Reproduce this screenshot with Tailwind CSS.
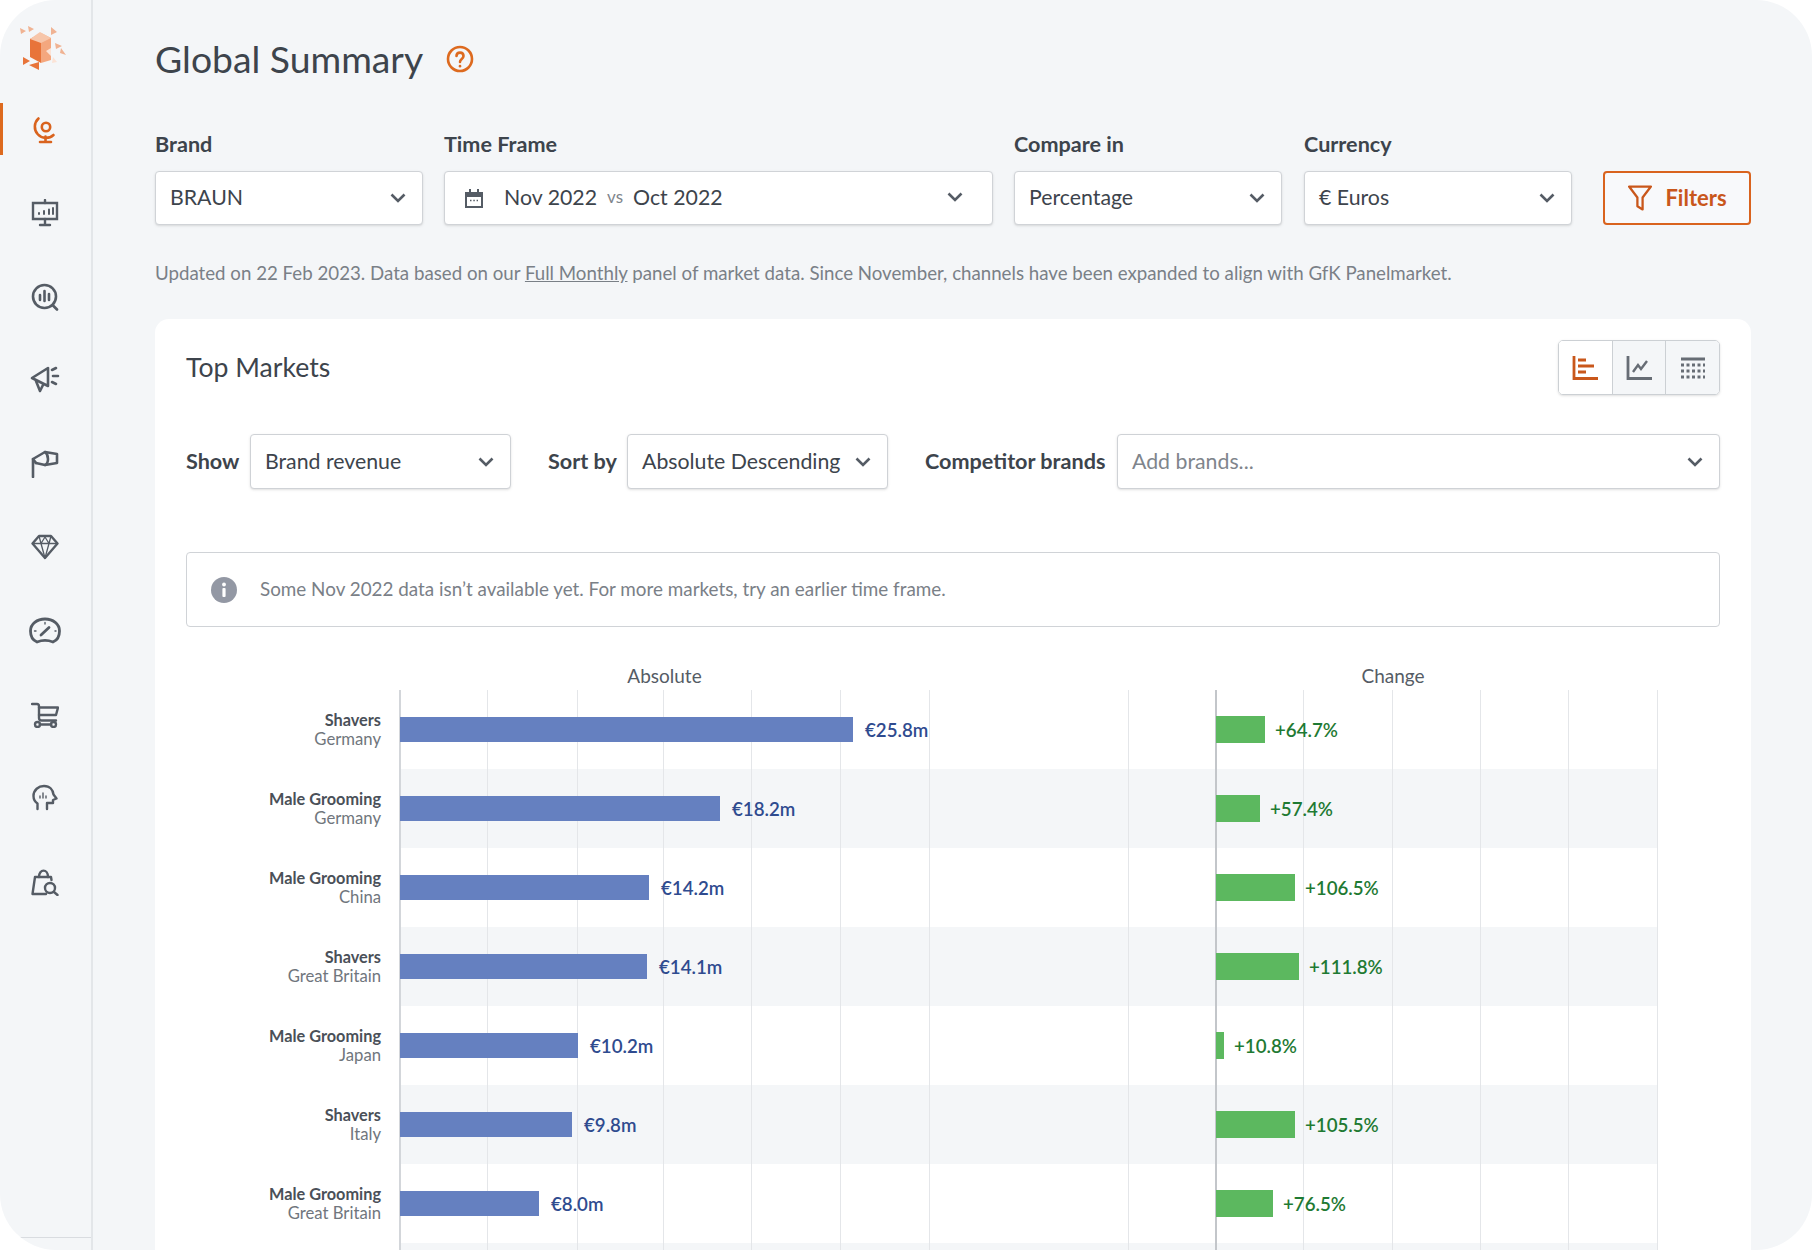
<!DOCTYPE html>
<html lang="en">
<head>
    <meta charset="UTF-8" />
    <meta name="viewport" content="width=device-width, initial-scale=1" />
    <title>Global Summary</title>
    <script src="https://cdn.jsdelivr.net/npm/@tailwindcss/browser@4"></script>
</head>
<body class="bg-white font-['Lato',sans-serif] text-[#3d444c]">
    <div class="flex w-[1812px] h-[1250px] overflow-hidden rounded-[56px] bg-[#f4f6f8]">
        <!-- Sidebar -->
        <aside class="relative w-[93px] shrink-0 h-full border-r-2 border-[#e3e6e9]">
            <div class="h-[103px] flex items-start justify-center pt-[24px] pr-[2px]">
                <svg width="52" height="52" viewBox="0 0 52 52">
                    <path d="M11 15 L22 9 L22 39 L11 33Z" fill="#e8743a"/>
                    <path d="M22 9 L32 14 L32 36 L22 39Z" fill="#f4a77e"/>
                    <path d="M11 15 L21 8 L32 14 L22 19Z" fill="#f7c6aa"/>
                    <path d="M1 4 L7 7 L2 10Z M9 2 L15 5 L10 8Z M32 3 L38 8 L32 11Z M36 19 L43 22 L37 25Z M42 24 L47 31 L41 29Z" fill="#f0b393"/>
                    <path d="M4 33 L11 37 L4 41Z M10 41 L20 38 L20 46Z" fill="#e8743a"/>
                    <path d="M27 27 L32 24 L32 32Z M34 33 L38 38 L33 39Z" fill="#fbe3d6"/>
                </svg>
            </div>
            <div class="flex flex-col pr-[2px]">
                <div class="relative h-[52px] flex items-center justify-center">
                    <span class="absolute left-0 top-0 w-[3px] h-[52px] bg-[#dd6a1f]"></span>
                    <svg class="mt-[2px]" width="24" height="28" viewBox="0 0 24 28" fill="none" stroke="#d9631e" stroke-width="2.6" stroke-linecap="round">
                        <circle cx="13" cy="11" r="4.2"/>
                        <path d="M5.5 2.5 A11 11 0 0 0 20.5 19"/>
                        <path d="M12.5 20.5 V25 M7 26 H18"/>
                    </svg>
                </div>
                <div class="h-[43px]"></div>
                <div class="h-[30px] flex items-center justify-center">
                    <svg width="28" height="28" viewBox="0 0 28 28" fill="none" stroke="#555c65" stroke-width="2.4" stroke-linecap="round">
                        <path d="M2 4 H26 V20 H2Z"/>
                        <path d="M14 1 V4 M14 20 V25 M9 26 H19"/>
                        <path d="M8 15 V14 M13 15 V12 M18 15 V10.5 M22 15 V9" stroke-width="2"/>
                    </svg>
                </div>
                <div class="h-[54px]"></div>
                <div class="h-[30px] flex items-center justify-center">
                    <svg width="28" height="28" viewBox="0 0 28 28" fill="none" stroke="#555c65" stroke-width="2.6" stroke-linecap="round">
                        <circle cx="13.5" cy="13.5" r="11.5"/>
                        <path d="M9 12 V17 M13.5 8 V18 M18 11 V17"/>
                        <path d="M21.5 22 L26 26.5"/>
                    </svg>
                </div>
                <div class="h-[52px]"></div>
                <div class="h-[30px] flex items-center justify-center">
                    <svg width="30" height="28" viewBox="0 0 30 28" fill="none" stroke="#555c65" stroke-width="2.6" stroke-linecap="round" stroke-linejoin="round">
                        <path d="M2 13 L18 3 V21 L2 13Z"/>
                        <path d="M6 16 L10 26 L13 20"/>
                        <path d="M22 5 L26 3 M23 11 H28 M22 17 L26 19"/>
                    </svg>
                </div>
                <div class="h-[55px]"></div>
                <div class="h-[30px] flex items-center justify-center">
                    <svg width="28" height="28" viewBox="0 0 28 28" fill="none" stroke="#555c65" stroke-width="2.6" stroke-linecap="round" stroke-linejoin="round">
                        <path d="M2 27 V9 L14 2 C18 5 18 13 14 15 L5 13"/>
                        <path d="M14 2 L26 4 V13 L14 15"/>
                        <path d="M2 9 L5 13"/>
                    </svg>
                </div>
                <div class="h-[53px]"></div>
                <div class="h-[30px] flex items-center justify-center">
                    <svg width="28" height="26" viewBox="0 0 28 26" fill="none" stroke="#555c65" stroke-width="2.4" stroke-linejoin="round">
                        <path d="M8 2 H20 L26.5 9.5 L14 24 L1.5 9.5Z"/>
                        <path d="M1.5 9.5 H26.5 M8 2 L10 9.5 L14 24 L18 9.5 L20 2 M10 9.5 L14 3 L18 9.5" stroke-width="1.3"/>
                    </svg>
                </div>
                <div class="h-[54px]"></div>
                <div class="h-[30px] flex items-center justify-center">
                    <svg width="32" height="28" viewBox="0 0 32 28" fill="none" stroke="#555c65" stroke-width="2.8" stroke-linecap="round">
                        <path d="M8 25 C3 23 1.5 18 1.5 14 C1.5 7 8 2 16 2 C24 2 30.5 7 30.5 14 C30.5 18 29 23 24 25 C19 23 13 23 8 25Z"/>
                        <path d="M12 18 L20 10.5" stroke-width="2.8"/>
                        <path d="M5.5 14 H7 M26 14 H27 M16 5.5 V7" stroke-width="1.4"/>
                    </svg>
                </div>
                <div class="h-[54px]"></div>
                <div class="h-[30px] flex items-center justify-center">
                    <svg width="28" height="26" viewBox="0 0 28 26" fill="none" stroke="#555c65" stroke-width="2.4" stroke-linecap="round" stroke-linejoin="round">
                        <path d="M1 2 H6 C7.5 2 8 3 8 4.5 V16 C8 18 9 18.5 10.5 18.5 H25"/>
                        <path d="M8 5.5 H27 L25 13 H8"/>
                        <circle cx="6.5" cy="22.5" r="2.5"/>
                        <circle cx="22.5" cy="22.5" r="2.5"/>
                        <path d="M9 22.5 H20"/>
                    </svg>
                </div>
                <div class="h-[53px]"></div>
                <div class="h-[30px] flex items-center justify-center">
                    <svg width="26" height="28" viewBox="0 0 26 28" fill="none" stroke="#555c65" stroke-width="2.4" stroke-linecap="round" stroke-linejoin="round">
                        <path d="M5.5 25 V19.5 C2.5 17.5 1.5 15 1.5 12 C1.5 6 6.5 2 12 2 C18 2 21 6 21.5 10.5 L24.5 14.5 L21 16 V19 H15 V25"/>
                        <path d="M8 14 V12 M11 14 V9 M14 14 V12" stroke-width="1.4"/>
                    </svg>
                </div>
                <div class="h-[54px]"></div>
                <div class="h-[30px] flex items-center justify-center">
                    <svg width="28" height="28" viewBox="0 0 28 28" fill="none" stroke="#555c65" stroke-width="2.4" stroke-linecap="round" stroke-linejoin="round">
                        <path d="M4 9 H20 L20.5 12 M4 9 L1.5 26 H15"/>
                        <path d="M8 9 C8 0.5 17 0.5 17 9"/>
                        <circle cx="19" cy="20" r="5"/>
                        <path d="M23 24 L26.5 27"/>
                    </svg>
                </div>
            </div>
            <div class="absolute left-0 right-0 top-[1237px] border-t border-[#d9dce0]"></div>
        </aside>

        <!-- Main -->
        <main class="flex-1 pl-[62px] pr-[61px] pt-[37px]">
            <div class="flex items-center h-[44px]">
                <h1 class="text-[37.3px] leading-[44px] font-normal text-[#3d444c]">Global Summary</h1>
                <svg class="ml-[23px]" width="28" height="28" viewBox="0 0 28 28" fill="none" stroke="#dd6a1f" stroke-width="2.6" stroke-linecap="round">
                    <circle cx="14" cy="14" r="12"/>
                    <path d="M10.5 11 C10.5 6.5 17.5 6.5 17.5 11 C17.5 14 14 14 14 17"/>
                    <path d="M14 21 V21.2"/>
                </svg>
            </div>

            <div class="flex mt-[49px] items-end">
                <div class="w-[268px] mr-[21px]">
                    <label class="block h-[28px] leading-[28px] text-[21.6px] font-bold mb-[13px]">Brand</label>
                    <div class="h-[54px] bg-white border border-[#d0d3d7] rounded-[4px] shadow-sm flex items-center justify-between pl-[14px] pr-[16px] text-[21.3px]">
                        <span>BRAUN</span>
                        <svg width="16" height="10" viewBox="0 0 16 10" fill="none" stroke="#555c65" stroke-width="2.6"><path d="M1.5 1.5 L8 8 L14.5 1.5"/></svg>
                    </div>
                </div>
                <div class="w-[549px] mr-[21px]">
                    <label class="block h-[28px] leading-[28px] text-[21.6px] font-bold mb-[13px]">Time Frame</label>
                    <div class="h-[54px] bg-white border border-[#d0d3d7] rounded-[4px] shadow-sm flex items-center pl-[20px] pr-[29px] text-[21.3px]">
                        <svg class="mr-[21px]" width="18" height="19" viewBox="0 0 18 19" fill="none" stroke="#555c65" stroke-width="2"><path d="M1 4 H17 V18 H1Z"/><path d="M1 6 H17" stroke-width="4"/><path d="M5 0 V3 M13 0 V3"/><path d="M5 11.5 H6.5 M8.3 11.5 H9.8 M11.6 11.5 H13" stroke-width="1.6"/></svg>
                        <span>Nov 2022</span>
                        <span class="mx-[10px] text-[17px] text-[#7f858c] pb-[2px]">vs</span>
                        <span>Oct 2022</span>
                        <svg class="ml-auto mb-[3px]" width="16" height="10" viewBox="0 0 16 10" fill="none" stroke="#555c65" stroke-width="2.6"><path d="M1.5 1.5 L8 8 L14.5 1.5"/></svg>
                    </div>
                </div>
                <div class="w-[268px] mr-[22px]">
                    <label class="block h-[28px] leading-[28px] text-[21.6px] font-bold mb-[13px]">Compare in</label>
                    <div class="h-[54px] bg-white border border-[#d0d3d7] rounded-[4px] shadow-sm flex items-center justify-between pl-[14px] pr-[16px] text-[21.3px]">
                        <span>Percentage</span>
                        <svg width="16" height="10" viewBox="0 0 16 10" fill="none" stroke="#555c65" stroke-width="2.6"><path d="M1.5 1.5 L8 8 L14.5 1.5"/></svg>
                    </div>
                </div>
                <div class="w-[268px] mr-[31px]">
                    <label class="block h-[28px] leading-[28px] text-[21.6px] font-bold mb-[13px]">Currency</label>
                    <div class="h-[54px] bg-white border border-[#d0d3d7] rounded-[4px] shadow-sm flex items-center justify-between pl-[14px] pr-[16px] text-[21.3px]">
                        <span>€ Euros</span>
                        <svg width="16" height="10" viewBox="0 0 16 10" fill="none" stroke="#555c65" stroke-width="2.6"><path d="M1.5 1.5 L8 8 L14.5 1.5"/></svg>
                    </div>
                </div>
                <button class="w-[148px] h-[54px] bg-white/40 border-2 border-[#d9631e] rounded-[4px] flex items-center justify-center gap-[12px] text-[22px] font-bold text-[#c9571b]">
                    <svg width="26" height="26" viewBox="0 0 24 25" fill="none" stroke="#c9571b" stroke-width="2.2" stroke-linejoin="round"><path d="M1.5 1.5 H22.5 L14.5 12 V23.5 L9.5 20.5 V12Z"/></svg>
                    <span class="pb-[1px]">Filters</span>
                </button>
            </div>

            <p class="mt-[36px] h-[24px] leading-[24px] text-[18.7px] text-[#7a8087] whitespace-nowrap">Updated on 22 Feb 2023. Data based on our <span class="underline">Full Monthly</span> panel of market data. Since November, channels have been expanded to align with GfK Panelmarket.</p>

            <!-- Card -->
            <section class="mt-[34px] bg-white rounded-t-[14px] px-[31px] pt-[21px] h-[1000px]">
                <div class="flex items-center justify-between h-[55px]">
                    <h2 class="text-[26.6px] font-normal">Top Markets</h2>
                    <div class="flex h-[55px] w-[162px] border border-[#ccd0d4] rounded-[5px] shadow-sm overflow-hidden">
                        <div class="flex-1 bg-white flex items-center justify-center">
                            <svg width="26" height="24" viewBox="0 0 26 24" fill="none" stroke="#c9571b" stroke-width="2.8"><path d="M2 0 V22.5 H26"/><path d="M6 4 H14 M6 10 H22 M6 16 H14" stroke-width="2.8"/></svg>
                        </div>
                        <div class="flex-1 bg-[#f4f6f8] border-x border-[#ccd0d4] flex items-center justify-center">
                            <svg width="26" height="24" viewBox="0 0 26 24" fill="none" stroke="#676d75" stroke-width="2.8"><path d="M2 0 V22.5 H26"/><path d="M7 16 L12 9 L15 13 L21 5" stroke-width="2.4"/></svg>
                        </div>
                        <div class="flex-1 bg-[#f4f6f8] flex items-center justify-center">
                            <svg width="26" height="22" viewBox="0 0 26 22" fill="none" stroke="#676d75"><path d="M1 2 H25" stroke-width="3"/><path d="M1 8 H25 M1 14 H25 M1 20 H25" stroke-width="3" stroke-dasharray="3 2.5"/></svg>
                        </div>
                    </div>
                </div>

                <div class="flex items-center h-[55px] mt-[39px] text-[21.3px]">
                    <span class="font-bold text-[21.6px] w-[64px]">Show</span>
                    <div class="w-[261px] h-[55px] bg-white border border-[#cfd2d6] rounded-[4px] shadow-sm flex items-center justify-between pl-[14px] pr-[16px]">
                        <span>Brand revenue</span>
                        <svg width="16" height="10" viewBox="0 0 16 10" fill="none" stroke="#555c65" stroke-width="2.6"><path d="M1.5 1.5 L8 8 L14.5 1.5"/></svg>
                    </div>
                    <span class="font-bold text-[21.6px] ml-[37px] w-[79px]">Sort by</span>
                    <div class="w-[261px] h-[55px] bg-white border border-[#cfd2d6] rounded-[4px] shadow-sm flex items-center justify-between pl-[14px] pr-[16px]">
                        <span>Absolute Descending</span>
                        <svg width="16" height="10" viewBox="0 0 16 10" fill="none" stroke="#555c65" stroke-width="2.6"><path d="M1.5 1.5 L8 8 L14.5 1.5"/></svg>
                    </div>
                    <span class="font-bold text-[21.6px] ml-[37px] w-[192px] whitespace-nowrap">Competitor brands</span>
                    <div class="flex-1 h-[55px] bg-white border border-[#cfd2d6] rounded-[4px] shadow-sm flex items-center justify-between pl-[14px] pr-[16px]">
                        <span class="text-[#7f858c]">Add brands...</span>
                        <svg width="16" height="10" viewBox="0 0 16 10" fill="none" stroke="#555c65" stroke-width="2.6"><path d="M1.5 1.5 L8 8 L14.5 1.5"/></svg>
                    </div>
                </div>

                <div class="flex items-center h-[75px] mt-[63px] border border-[#d0d3d7] rounded-[4px] pl-[24px] text-[18.85px] text-[#7a8087]">
                    <svg class="mr-[23px]" width="26" height="26" viewBox="0 0 26 26"><circle cx="13" cy="13" r="13" fill="#9398a4"/><rect x="11.4" y="11" width="3.2" height="9" rx="1" fill="#fff"/><circle cx="13" cy="7.5" r="1.9" fill="#fff"/></svg>
                    Some Nov 2022 data isn’t available yet. For more markets, try an earlier time frame.
                </div>

                <!-- Chart -->
                <div class="flex mt-[38px] h-[24px] leading-[22px] text-[19px] text-[#555c65] text-center">
                    <div class="ml-[214px] w-[529px]">Absolute</div>
                    <div class="ml-[199px] w-[530px]">Change</div>
                </div>
                <div class="relative mt-[1px]">
                    <div class="absolute top-0 bottom-0 left-[213px] w-[2px] bg-[#d3d6da] z-[5]"></div>
                    <div class="absolute top-0 bottom-0 left-[301px] w-px bg-[#e4e6e9] z-[5]"></div>
                    <div class="absolute top-0 bottom-0 left-[391px] w-px bg-[#e4e6e9] z-[5]"></div>
                    <div class="absolute top-0 bottom-0 left-[477px] w-px bg-[#e4e6e9] z-[5]"></div>
                    <div class="absolute top-0 bottom-0 left-[565px] w-px bg-[#e4e6e9] z-[5]"></div>
                    <div class="absolute top-0 bottom-0 left-[654px] w-px bg-[#e4e6e9] z-[5]"></div>
                    <div class="absolute top-0 bottom-0 left-[743px] w-px bg-[#e4e6e9] z-[5]"></div>
                    <div class="absolute top-0 bottom-0 left-[942px] w-px bg-[#e4e6e9] z-[5]"></div>
                    <div class="absolute top-0 bottom-0 left-[1029px] w-[2px] bg-[#c3c6ca] z-[5]"></div>
                    <div class="absolute top-0 bottom-0 left-[1117px] w-px bg-[#e4e6e9] z-[5]"></div>
                    <div class="absolute top-0 bottom-0 left-[1206px] w-px bg-[#e4e6e9] z-[5]"></div>
                    <div class="absolute top-0 bottom-0 left-[1294px] w-px bg-[#e4e6e9] z-[5]"></div>
                    <div class="absolute top-0 bottom-0 left-[1382px] w-px bg-[#e4e6e9] z-[5]"></div>
                    <div class="absolute top-0 bottom-0 left-[1471px] w-px bg-[#e4e6e9] z-[5]"></div>

                    <div class="flex h-[79px] items-stretch">
                        <div class="w-[214px] pr-[19px] flex flex-col justify-center items-end text-[16.3px] leading-[19px] text-[#70767d]"><b class="font-bold text-[#4a5058]">Shavers</b><span class="text-[16.7px] mt-[1px]">Germany</span></div>
                        <div class="w-[816px] flex items-center"><div class="relative z-10 w-[453px] h-[25px] bg-[#6580c0]"></div><span class="relative z-10 ml-[12px] pt-[2px] text-[18.7px] font-semibold text-[#2f4b8f]">€25.8m</span></div>
                        <div class="w-[442px] flex items-center"><div class="relative z-10 w-[49px] h-[27px] bg-[#5cb85f]"></div><span class="relative z-10 ml-[10px] pt-[2px] text-[18.7px] font-semibold text-[#1f7a33]">+64.7%</span></div>
                    </div>
                    <div class="flex h-[79px] items-stretch">
                        <div class="w-[214px] pr-[19px] flex flex-col justify-center items-end text-[16.3px] leading-[19px] text-[#70767d]"><b class="font-bold text-[#4a5058]">Male Grooming</b><span class="text-[16.7px] mt-[1px]">Germany</span></div>
                        <div class="w-[816px] flex items-center bg-[#f4f6f8]"><div class="relative z-10 w-[320px] h-[25px] bg-[#6580c0]"></div><span class="relative z-10 ml-[12px] pt-[2px] text-[18.7px] font-semibold text-[#2f4b8f]">€18.2m</span></div>
                        <div class="w-[442px] flex items-center bg-[#f4f6f8]"><div class="relative z-10 w-[44px] h-[27px] bg-[#5cb85f]"></div><span class="relative z-10 ml-[10px] pt-[2px] text-[18.7px] font-semibold text-[#1f7a33]">+57.4%</span></div>
                    </div>
                    <div class="flex h-[79px] items-stretch">
                        <div class="w-[214px] pr-[19px] flex flex-col justify-center items-end text-[16.3px] leading-[19px] text-[#70767d]"><b class="font-bold text-[#4a5058]">Male Grooming</b><span class="text-[16.7px] mt-[1px]">China</span></div>
                        <div class="w-[816px] flex items-center"><div class="relative z-10 w-[249px] h-[25px] bg-[#6580c0]"></div><span class="relative z-10 ml-[12px] pt-[2px] text-[18.7px] font-semibold text-[#2f4b8f]">€14.2m</span></div>
                        <div class="w-[442px] flex items-center"><div class="relative z-10 w-[79px] h-[27px] bg-[#5cb85f]"></div><span class="relative z-10 ml-[10px] pt-[2px] text-[18.7px] font-semibold text-[#1f7a33]">+106.5%</span></div>
                    </div>
                    <div class="flex h-[79px] items-stretch">
                        <div class="w-[214px] pr-[19px] flex flex-col justify-center items-end text-[16.3px] leading-[19px] text-[#70767d]"><b class="font-bold text-[#4a5058]">Shavers</b><span class="text-[16.7px] mt-[1px]">Great Britain</span></div>
                        <div class="w-[816px] flex items-center bg-[#f4f6f8]"><div class="relative z-10 w-[247px] h-[25px] bg-[#6580c0]"></div><span class="relative z-10 ml-[12px] pt-[2px] text-[18.7px] font-semibold text-[#2f4b8f]">€14.1m</span></div>
                        <div class="w-[442px] flex items-center bg-[#f4f6f8]"><div class="relative z-10 w-[83px] h-[27px] bg-[#5cb85f]"></div><span class="relative z-10 ml-[10px] pt-[2px] text-[18.7px] font-semibold text-[#1f7a33]">+111.8%</span></div>
                    </div>
                    <div class="flex h-[79px] items-stretch">
                        <div class="w-[214px] pr-[19px] flex flex-col justify-center items-end text-[16.3px] leading-[19px] text-[#70767d]"><b class="font-bold text-[#4a5058]">Male Grooming</b><span class="text-[16.7px] mt-[1px]">Japan</span></div>
                        <div class="w-[816px] flex items-center"><div class="relative z-10 w-[178px] h-[25px] bg-[#6580c0]"></div><span class="relative z-10 ml-[12px] pt-[2px] text-[18.7px] font-semibold text-[#2f4b8f]">€10.2m</span></div>
                        <div class="w-[442px] flex items-center"><div class="relative z-10 w-[8px] h-[27px] bg-[#5cb85f]"></div><span class="relative z-10 ml-[10px] pt-[2px] text-[18.7px] font-semibold text-[#1f7a33]">+10.8%</span></div>
                    </div>
                    <div class="flex h-[79px] items-stretch">
                        <div class="w-[214px] pr-[19px] flex flex-col justify-center items-end text-[16.3px] leading-[19px] text-[#70767d]"><b class="font-bold text-[#4a5058]">Shavers</b><span class="text-[16.7px] mt-[1px]">Italy</span></div>
                        <div class="w-[816px] flex items-center bg-[#f4f6f8]"><div class="relative z-10 w-[172px] h-[25px] bg-[#6580c0]"></div><span class="relative z-10 ml-[12px] pt-[2px] text-[18.7px] font-semibold text-[#2f4b8f]">€9.8m</span></div>
                        <div class="w-[442px] flex items-center bg-[#f4f6f8]"><div class="relative z-10 w-[79px] h-[27px] bg-[#5cb85f]"></div><span class="relative z-10 ml-[10px] pt-[2px] text-[18.7px] font-semibold text-[#1f7a33]">+105.5%</span></div>
                    </div>
                    <div class="flex h-[79px] items-stretch">
                        <div class="w-[214px] pr-[19px] flex flex-col justify-center items-end text-[16.3px] leading-[19px] text-[#70767d]"><b class="font-bold text-[#4a5058]">Male Grooming</b><span class="text-[16.7px] mt-[1px]">Great Britain</span></div>
                        <div class="w-[816px] flex items-center"><div class="relative z-10 w-[139px] h-[25px] bg-[#6580c0]"></div><span class="relative z-10 ml-[12px] pt-[2px] text-[18.7px] font-semibold text-[#2f4b8f]">€8.0m</span></div>
                        <div class="w-[442px] flex items-center"><div class="relative z-10 w-[57px] h-[27px] bg-[#5cb85f]"></div><span class="relative z-10 ml-[10px] pt-[2px] text-[18.7px] font-semibold text-[#1f7a33]">+76.5%</span></div>
                    </div>
                    <div class="flex h-[79px] items-stretch">
                        <div class="w-[214px]"></div>
                        <div class="w-[1258px] bg-[#f4f6f8]"></div>
                    </div>
                </div>
            </section>
        </main>
    </div>
</body>
</html>
